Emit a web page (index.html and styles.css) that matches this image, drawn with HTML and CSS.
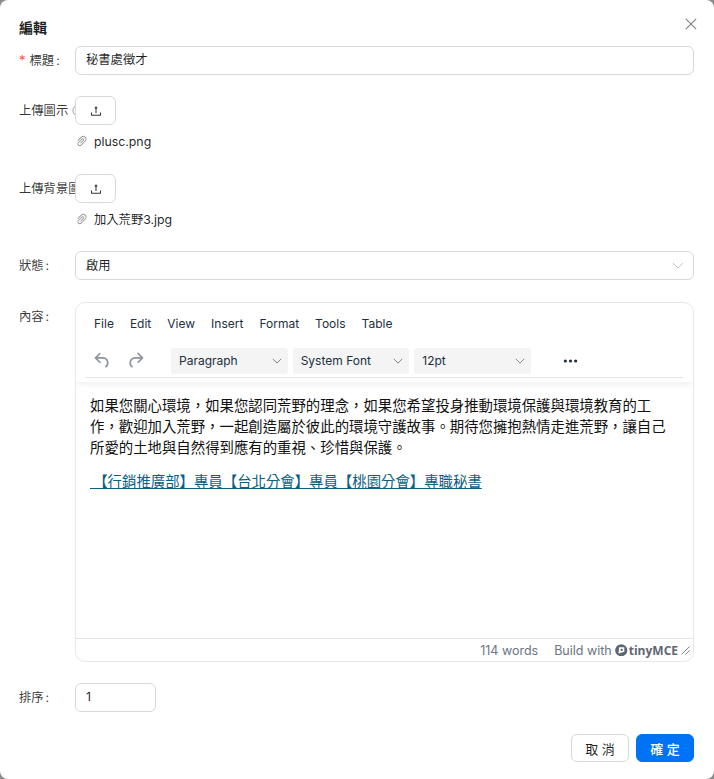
FILE: index.html
```html
<!DOCTYPE html>
<html lang="zh-Hant">
<head>
<meta charset="utf-8">
<title>編輯</title>
<link rel="stylesheet" href="styles.css">
</head>
<body>
<div class="modal">
  <header class="modal-head">
    <h1 class="modal-title">編輯</h1>
    <svg class="close" viewBox="0 0 14 14"><path d="M1 1l12 12M13 1L1 13"/></svg>
  </header>
  <form class="form">
    <div class="row row-title">
      <div class="label"><span class="req">*</span>標題<span class="colon">:</span></div>
      <div class="control"><div class="input">秘書處徵才</div></div>
    </div>
    <div class="row row-upload">
      <div class="label">上傳圖示<svg class="info" viewBox="0 0 14 14"><circle cx="7" cy="7" r="6"/></svg></div>
      <div class="control">
        <div class="upload-btn"><svg class="ic-upload" viewBox="64 64 896 896"><path d="M400 317.7h73.9V656c0 4.4 3.6 8 8 8h60c4.4 0 8-3.6 8-8V317.7H624c6.7 0 10.4-7.7 6.3-12.9L518.3 163a8 8 0 00-12.6 0l-112 141.7c-4.1 5.3-.4 13 6.3 13zM878 626h-60c-4.4 0-8 3.6-8 8v154H214V634c0-4.4-3.6-8-8-8h-60c-4.4 0-8 3.6-8 8v198c0 17.7 14.3 32 32 32h684c17.7 0 32-14.3 32-32V634c0-4.4-3.6-8-8-8z"/></svg></div>
        <div class="file"><svg class="ic-clip" viewBox="64 64 896 896"><path d="M779.3 196.6c-94.2-94.2-247.6-94.2-341.7 0l-261 260.8c-1.7 1.7-2.6 4-2.6 6.4s.9 4.7 2.6 6.4l36.9 36.9a9 9 0 0012.7 0l261-260.8c32.4-32.4 75.5-50.2 121.3-50.2s88.9 17.8 121.2 50.2c32.4 32.4 50.2 75.5 50.2 121.2 0 45.8-17.8 88.8-50.2 121.2l-266 265.9-43.1 43.1c-40.3 40.3-105.8 40.3-146.1 0-19.5-19.5-30.2-45.4-30.2-73s10.7-53.5 30.2-73l263.9-263.8c6.7-6.6 15.5-10.3 24.9-10.3h.1c9.4 0 18.1 3.7 24.7 10.3 6.7 6.7 10.3 15.5 10.3 24.9 0 9.3-3.7 18.1-10.3 24.7L372.4 653c-1.7 1.7-2.6 4-2.6 6.4s.9 4.7 2.6 6.4l36.9 36.9a9 9 0 0012.7 0l215.6-215.6c19.9-19.9 30.8-46.3 30.8-74.4s-11-54.6-30.8-74.4c-41.1-41.1-107.9-41-149 0L463 364 224.8 602.1A172.22 172.22 0 00174 724.8c0 46.3 18.1 89.8 50.8 122.5 33.9 33.8 78.3 50.7 122.7 50.7 44.4 0 88.8-16.9 122.6-50.7l309.2-309C824.8 492.7 850 432 850 367.5c.1-64.6-25.1-125.3-70.7-170.9z"/></svg><span>plusc.png</span></div>
      </div>
    </div>
    <div class="row row-upload">
      <div class="label">上傳背景圖片</div>
      <div class="control">
        <div class="upload-btn"><svg class="ic-upload" viewBox="64 64 896 896"><path d="M400 317.7h73.9V656c0 4.4 3.6 8 8 8h60c4.4 0 8-3.6 8-8V317.7H624c6.7 0 10.4-7.7 6.3-12.9L518.3 163a8 8 0 00-12.6 0l-112 141.7c-4.1 5.3-.4 13 6.3 13zM878 626h-60c-4.4 0-8 3.6-8 8v154H214V634c0-4.4-3.6-8-8-8h-60c-4.4 0-8 3.6-8 8v198c0 17.7 14.3 32 32 32h684c17.7 0 32-14.3 32-32V634c0-4.4-3.6-8-8-8z"/></svg></div>
        <div class="file"><svg class="ic-clip" viewBox="64 64 896 896"><path d="M779.3 196.6c-94.2-94.2-247.6-94.2-341.7 0l-261 260.8c-1.7 1.7-2.6 4-2.6 6.4s.9 4.7 2.6 6.4l36.9 36.9a9 9 0 0012.7 0l261-260.8c32.4-32.4 75.5-50.2 121.3-50.2s88.9 17.8 121.2 50.2c32.4 32.4 50.2 75.5 50.2 121.2 0 45.8-17.8 88.8-50.2 121.2l-266 265.9-43.1 43.1c-40.3 40.3-105.8 40.3-146.1 0-19.5-19.5-30.2-45.4-30.2-73s10.7-53.5 30.2-73l263.9-263.8c6.7-6.6 15.5-10.3 24.9-10.3h.1c9.4 0 18.1 3.7 24.7 10.3 6.7 6.7 10.3 15.5 10.3 24.9 0 9.3-3.7 18.1-10.3 24.7L372.4 653c-1.7 1.7-2.6 4-2.6 6.4s.9 4.7 2.6 6.4l36.9 36.9a9 9 0 0012.7 0l215.6-215.6c19.9-19.9 30.8-46.3 30.8-74.4s-11-54.6-30.8-74.4c-41.1-41.1-107.9-41-149 0L463 364 224.8 602.1A172.22 172.22 0 00174 724.8c0 46.3 18.1 89.8 50.8 122.5 33.9 33.8 78.3 50.7 122.7 50.7 44.4 0 88.8-16.9 122.6-50.7l309.2-309C824.8 492.7 850 432 850 367.5c.1-64.6-25.1-125.3-70.7-170.9z"/></svg><span>加入荒野3.jpg</span></div>
      </div>
    </div>
    <div class="row row-status">
      <div class="label">狀態<span class="colon">:</span></div>
      <div class="control"><div class="input select"><span>啟用</span><svg class="chev-select" viewBox="0 0 12 7"><path d="M1 1l5 5 5-5"/></svg></div></div>
    </div>
    <div class="row row-content">
      <div class="label">內容<span class="colon">:</span></div>
      <div class="control">
        <div class="editor">
          <div class="editor-head">
            <nav class="menubar"><span>File</span><span>Edit</span><span>View</span><span>Insert</span><span>Format</span><span>Tools</span><span>Table</span></nav>
            <div class="toolbar">
              <div class="history">
                <svg class="ic-hist" viewBox="0 0 24 24"><path d="M6.4 8H12c3.7 0 6.2 2 6.8 5.1.6 2.7-.4 5.6-2.3 6.8a1 1 0 0 1-1-1.8c1.1-.7 1.8-2.7 1.4-4.6-.5-2.1-2.1-3.5-4.9-3.5H6.4l3.3 3.3a1 1 0 1 1-1.4 1.4l-5-5a1 1 0 0 1 0-1.4l5-5a1 1 0 0 1 1.4 1.4L6.4 8Z"/></svg>
                <svg class="ic-hist" viewBox="0 0 24 24"><path d="M17.6 10H12c-2.8 0-4.4 1.4-4.9 3.5-.4 2 .3 3.9 1.4 4.6a1 1 0 1 1-1 1.8c-2-1.2-2.9-4.1-2.3-6.8.6-3 3-5.1 6.8-5.1h5.6l-3.3-3.3a1 1 0 1 1 1.4-1.4l5 5a1 1 0 0 1 0 1.4l-5 5a1 1 0 0 1-1.4-1.4l3.3-3.3Z"/></svg>
              </div>
              <div class="tb-select">Paragraph<svg class="chev" viewBox="0 0 12 7"><path d="M1 1l5 5 5-5"/></svg></div>
              <div class="tb-select">System Font<svg class="chev" viewBox="0 0 12 7"><path d="M1 1l5 5 5-5"/></svg></div>
              <div class="tb-select">12pt<svg class="chev" viewBox="0 0 12 7"><path d="M1 1l5 5 5-5"/></svg></div>
              <svg class="more" viewBox="0 0 16 4"><circle cx="2.5" cy="2" r="1.7"/><circle cx="8" cy="2" r="1.7"/><circle cx="13.5" cy="2" r="1.7"/></svg>
            </div>
          </div>
          <div class="editor-body">
            <p>如果您關心環境，如果您認同荒野的理念，如果您希望投身推動環境保護與環境教育的工作，歡迎加入荒野，一起創造屬於彼此的環境守護故事。期待您擁抱熱情走進荒野，讓自己所愛的土地與自然得到應有的重視、珍惜與保護。</p>
            <p><a class="link">&nbsp;【行銷推廣部】專員【台北分會】專員【桃園分會】專職秘書</a></p>
          </div>
          <div class="statusbar">
            <span class="words">114 words</span>
            <span class="brand">Build with <svg class="ic-tiny" viewBox="0 0 14 14"><circle cx="7" cy="7" r="6.8"/><path class="tiny-cut" d="M4.6 3.6h5.8v5.2L4 10.6zM6.4 5.4v2.8l2.2-.7V5.4z"/></svg><b class="tiny">tinyMCE</b></span>
            <svg class="grip" viewBox="0 0 10 10"><path d="M9.5 1.5l-8 8M9.5 5.5l-4 4"/></svg>
          </div>
        </div>
      </div>
    </div>
    <div class="row row-sort">
      <div class="label">排序<span class="colon">:</span></div>
      <div class="control"><div class="input number">1</div></div>
    </div>
  </form>
  <footer class="modal-foot">
    <div class="btn">取 消</div>
    <div class="btn primary">確 定</div>
  </footer>
</div>
</body>
</html>
```
FILE: styles.css
```css
* { box-sizing: border-box; }
html, body { margin: 0; height: 100%; }
body {
  background: #8c8c8c;
  font-family: Inter, "Noto Sans CJK TC", sans-serif;
  font-size: 12.3px;
  color: rgba(0,0,0,.88);
  overflow: hidden;
}
.modal {
  height: 779px;
  background: #fff;
  border-radius: 8px;
  padding: 17px 20px 0 19px;
}
.modal-head { display: flex; justify-content: space-between; align-items: center; height: 22px; margin-bottom: 7px; }
.modal-title { margin: 0; font-size: 14px; font-weight: 700; line-height: 22px; }
.close { width: 12px; height: 12px; fill: none; stroke: #7b7b7b; stroke-width: 1.2; margin: -8px -3px 0 0; }
.row { display: flex; align-items: flex-start; }
.label { width: 56px; flex: none; height: 29px; line-height: 29px; white-space: nowrap; overflow: hidden; display: flex; align-items: center; color: rgba(0,0,0,.8); }
.req { color: #ff4d4f; margin-right: 4px; font-size: 13px; }
.colon { margin-left: 2px; }
.control { flex: 1; min-width: 0; }
.input { height: 29px; border: 1px solid #d9d9d9; border-radius: 6px; padding: 0 10px; line-height: 26px; }
.select { display: flex; justify-content: space-between; align-items: center; padding-right: 9px; line-height: 27px; }
.chev-select { width: 12px; height: 7px; fill: none; stroke: #c4c4c4; stroke-width: 1; }
.number { width: 81px; }
.row-title { margin-bottom: 21px; }
.row-upload { margin-bottom: 22px; }
.row-upload + .row-upload { margin-bottom: 21px; }
.row-status { margin-bottom: 22px; }
.row-content { margin-bottom: 21px; }
.upload-btn { width: 41px; height: 29px; border: 1px solid #d9d9d9; border-radius: 6px; display: flex; align-items: center; justify-content: center; }
.ic-upload { width: 12px; height: 12px; fill: #333; }
.file { display: flex; align-items: center; height: 22px; margin-top: 5px; padding-left: 1px; gap: 6px; }
.ic-clip { width: 12px; height: 12px; fill: #9a9a9a; }
.info { width: 13px; height: 13px; flex: none; margin-left: 4px; fill: none; stroke: #999; }
.editor { height: 360px; border: 1px solid #e8e8e8; border-radius: 10px; display: flex; flex-direction: column; overflow: hidden; }
.editor-head { height: 79px; flex: none; padding: 0 10px; box-shadow: 0 3px 6px rgba(0,0,0,.06); position: relative; }
.menubar { display: flex; gap: 16px; height: 41px; align-items: center; padding-left: 8px; font-size: 12px; color: #222f3e; }
.toolbar { display: flex; align-items: center; height: 34px; border-bottom: 1px solid #e3e3e3; gap: 5px; }
.history { display: flex; width: 80px; gap: 12.5px; padding-left: 5.5px; padding-bottom: 1px; align-items: center; flex: none; }
.ic-hist { width: 21px; height: 21px; fill: #8f959c; }
.tb-select { width: 116.67px; height: 26px; background: #f4f4f4; border-radius: 3px; display: flex; align-items: center; justify-content: space-between; padding: 0 6px 0 8px; font-size: 12px; color: #222f3e; }
.chev { width: 10px; height: 6px; fill: none; stroke: #7d8590; stroke-width: 1.2; }
.more { width: 15px; height: 4px; fill: #222f3e; margin: 0 0 0 27px; }
.editor-body { flex: 1; padding: 12px 14px 0; font-size: 14.4px; line-height: 21px; color: #111; font-family: "Noto Sans CJK TC", sans-serif; }
.editor-body p { margin: 0 0 13px; }
.link { color: #0b6082; text-decoration: underline; }
.statusbar { height: 23px; flex: none; border-top: 1px solid #e3e3e3; display: flex; align-items: center; justify-content: flex-end; font-size: 12.5px; color: #6b7480; padding-right: 3px; }
.words { margin-right: 16px; }
.brand { display: flex; align-items: center; white-space: pre; }
.ic-tiny { width: 12.5px; height: 12.5px; fill: #5f6771; margin-right: 1px; }
.tiny-cut { fill: #fff; fill-rule: evenodd; }
.tiny { font-weight: 700; font-size: 12px; color: #5f6771; font-family: "Open Sans", sans-serif; }
.grip { width: 10px; height: 10px; fill: none; stroke: #7d8590; stroke-width: 1; margin-left: 2px; }
.modal-foot { display: flex; justify-content: flex-end; gap: 7px; margin-top: 22px; }
.btn { width: 58px; height: 28px; border: 1px solid #d9d9d9; border-radius: 6px; display: flex; align-items: center; justify-content: center; font-size: 13px; white-space: pre; }
.primary { background: #0073f5; border-color: #0073f5; color: #fff; font-weight: 500; }
```
